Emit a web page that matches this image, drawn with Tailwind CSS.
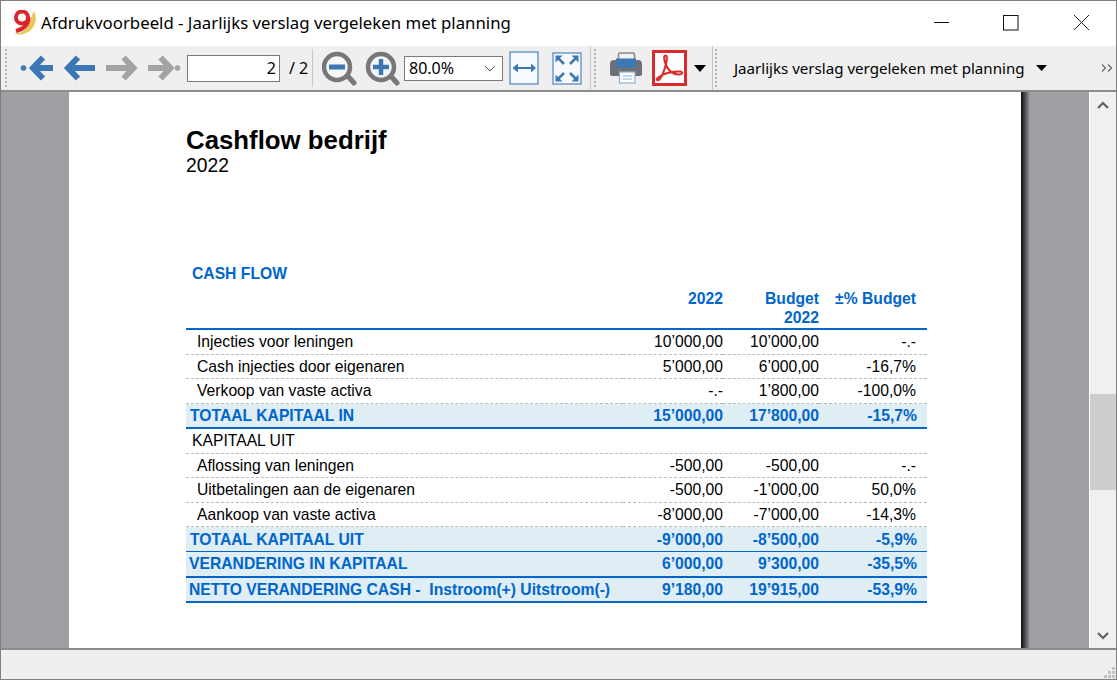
<!DOCTYPE html>
<html lang="nl">
<head>
    <meta charset="UTF-8">
    <title>Afdrukvoorbeeld - Jaarlijks verslag vergeleken met planning</title>
    <script src="https://cdn.jsdelivr.net/npm/@tailwindcss/browser@4"></script>
</head>
<body class="bg-white">
<div class="w-[1117px] h-[680px] flex flex-col border border-[#7f7f7f] overflow-hidden font-['Noto_Sans',sans-serif] text-black">

    <!-- titelbalk -->
    <div class="h-[45px] shrink-0 bg-white flex items-center">
        <svg class="ml-[11px] w-[25px] h-[28px]" viewBox="0 0 25 28">
            <path d="M22 1 C26 9 23 18 16 22 C11 25 5 25.500 2 23 C8 24 13 21 16 15 Z" fill="#e9c65a"/>
            <circle cx="10" cy="7.500" r="6" fill="none" stroke="#d8262c" stroke-width="4"/>
            <path d="M16.500 7 C16.500 14 12 19 4 21" fill="none" stroke="#d8262c" stroke-width="4"/>
        </svg>
        <div class="ml-[4px] text-[16.800px] leading-none whitespace-nowrap">Afdrukvoorbeeld - Jaarlijks verslag vergeleken met planning</div>
        <div class="ml-auto flex items-center">
            <svg class="w-[70px] h-[45px]" viewBox="0 0 70 45"><path d="M28 21.500 H43" stroke="#111" stroke-width="1"/></svg>
            <svg class="w-[70px] h-[45px]" viewBox="0 0 70 45"><rect x="27.500" y="14.500" width="14.500" height="14.500" fill="none" stroke="#111" stroke-width="1"/></svg>
            <svg class="w-[70px] h-[45px]" viewBox="0 0 70 45"><path d="M28 14 L43 29 M43 14 L28 29" stroke="#222" stroke-width="1"/></svg>
        </div>
    </div>

    <!-- werkbalk -->
    <div class="h-[46px] shrink-0 bg-[#efefef] border-b-2 border-[#8c8c8c] flex items-center relative">
        <div class="ml-[4px] w-[3px] h-[38px] border-l-2 border-dotted border-[#b5b5b5]"></div>

        <svg class="ml-[12px] w-[34px] h-[28px]" viewBox="0 0 34 28">
            <circle cx="3.500" cy="14" r="2.800" fill="#3d78b4"/>
            <path d="M23 3.500 L13 14 L23 24.500" fill="none" stroke="#3d78b4" stroke-width="6"/>
            <path d="M14 14 H33" stroke="#3d78b4" stroke-width="6"/>
        </svg>
        <svg class="ml-[8px] w-[34px] h-[28px]" viewBox="0 0 34 28">
            <path d="M16 3.500 L6 14 L16 24.500" fill="none" stroke="#3d78b4" stroke-width="6"/>
            <path d="M7 14 H33" stroke="#3d78b4" stroke-width="6"/>
        </svg>
        <svg class="ml-[9px] w-[34px] h-[28px]" viewBox="0 0 34 28">
            <path d="M18.500 3.500 L28.500 14 L18.500 24.500" fill="none" stroke="#a3a3a3" stroke-width="6"/>
            <path d="M1 14 H27" stroke="#a3a3a3" stroke-width="6"/>
        </svg>
        <svg class="ml-[9px] w-[33px] h-[28px]" viewBox="0 0 33 28">
            <path d="M12.500 3.500 L22.500 14 L12.500 24.500" fill="none" stroke="#a3a3a3" stroke-width="6"/>
            <path d="M0 14 H21" stroke="#a3a3a3" stroke-width="6"/>
            <circle cx="29.500" cy="14" r="2.800" fill="#a3a3a3"/>
        </svg>

        <div class="ml-[6px] w-[93px] h-[27px] bg-white border border-[#7a7a7a] flex items-center justify-end pr-[3px] text-[16px]">2</div>
        <div class="ml-[9px] w-[23px] text-[16px] whitespace-nowrap">/ 2</div>
        <div class="w-px h-[38px] bg-[#c8c8c8]"></div>

        <svg class="ml-[9px] w-[35px] h-[36px]" viewBox="0 0 35 36">
            <path d="M24 24 L32 33" stroke="#777" stroke-width="5" stroke-linecap="round"/>
            <circle cx="15" cy="17" r="13" fill="#f4f6f9" stroke="#777" stroke-width="4.500"/>
            <path d="M7 17 H23" stroke="#3d78b4" stroke-width="5"/>
        </svg>
        <svg class="ml-[8px] w-[35px] h-[36px]" viewBox="0 0 35 36">
            <path d="M24 24 L32 33" stroke="#777" stroke-width="5" stroke-linecap="round"/>
            <circle cx="16" cy="17" r="13" fill="#f4f6f9" stroke="#777" stroke-width="4.500"/>
            <path d="M8 17 H24 M16 9 V25" stroke="#3d78b4" stroke-width="4.500"/>
        </svg>

        <div class="ml-[4px] w-[99px] h-[25px] bg-white border border-[#7a7a7a] flex items-center pl-[4px] text-[16px] relative">
            80.0%
            <svg class="absolute right-[6px] top-[8px] w-[12px] h-[8px]" viewBox="0 0 12 8"><path d="M1 1 L6 6 L11 1" fill="none" stroke="#555" stroke-width="1"/></svg>
        </div>

        <svg class="ml-[6px] w-[30px] h-[34px]" viewBox="0 0 30 34">
            <rect x="1" y="1" width="28" height="32" fill="#f6f9fd" stroke="#6c9bcb" stroke-width="1.500"/>
            <path d="M7 17 H24" stroke="#3d78b4" stroke-width="2"/>
            <path d="M9 12.500 L3.500 17 L9 21.500 Z M22 12.500 L27 17 L22 21.500 Z" fill="#3d78b4"/>
        </svg>
        <svg class="ml-[13px] w-[30px] h-[33px]" viewBox="0 0 30 33">
            <rect x="1" y="1" width="28" height="31" fill="#f6f9fd" stroke="#6c9bcb" stroke-width="1.500"/>
            <path d="M5 5 L12 12 M25 5 L18 12 M5 28 L12 21 M25 28 L18 21" stroke="#3d78b4" stroke-width="2.500"/>
            <path d="M3.500 3.500 H10.500 L3.500 10.500 Z M26.500 3.500 H19.500 L26.500 10.500 Z M3.500 29.500 H10.500 L3.500 22.500 Z M26.500 29.500 H19.500 L26.500 22.500 Z" fill="#3d78b4"/>
        </svg>

        <div class="ml-[8px] w-px h-[44px] bg-[#c8c8c8]"></div>
        <div class="ml-[3px] w-[3px] h-[38px] border-l-2 border-dotted border-[#b5b5b5]"></div>

        <svg class="ml-[13px] w-[32px] h-[32px]" viewBox="0 0 32 32">
            <rect x="8.500" y="1" width="16" height="10" rx="1.500" fill="#f3f3f3" stroke="#888" stroke-width="1.500"/>
            <path d="M0 12 Q0 8 4 8 H28 Q32 8 32 12 V22 Q32 24 30 24 H2 Q0 24 0 22 Z" fill="#6d7278"/>
            <rect x="6" y="6.500" width="20" height="9" fill="#3d78b4"/>
            <rect x="9.500" y="20" width="15.500" height="11" fill="#fbfdff" stroke="#8fb0d0" stroke-width="1.200"/>
            <path d="M12.500 24 H22 M12.500 27 H22" stroke="#8fb0d0" stroke-width="1"/>
        </svg>

        <svg class="ml-[10px] w-[35px] h-[36px]" viewBox="0 0 35 36">
            <rect x="1.500" y="1.500" width="32" height="33" fill="#fff" stroke="#d82c2a" stroke-width="3"/>
            <path d="M5 30 C8 32 12 22 14 14 C15 9 15.500 5.500 13.500 5.500 C11.500 5.500 12 10 13.500 14 C16 20 21 24 26 24.500 C31 25 31.500 22 28 21.500 C22 21 13 23 8.500 26 C6 27.500 4 29 5 30 Z" fill="none" stroke="#d82c2a" stroke-width="2"/>
        </svg>
        <svg class="ml-[7px] w-[12px] h-[7px]" viewBox="0 0 12 7"><path d="M0 0 H12 L6 7 Z" fill="#000"/></svg>

        <div class="ml-[6px] w-px h-[44px] bg-[#c8c8c8]"></div>
        <div class="ml-[2px] w-[3px] h-[38px] border-l-2 border-dotted border-[#b5b5b5]"></div>

        <div class="ml-[16px] text-[15.100px] whitespace-nowrap">Jaarlijks verslag vergeleken met planning</div>
        <svg class="ml-[11px] w-[11px] h-[6px]" viewBox="0 0 11 6"><path d="M0 0 H11 L5.500 6 Z" fill="#000"/></svg>
        <svg class="ml-auto mr-[3px] w-[12px] h-[8px]" viewBox="0 0 12 8"><path d="M1 0.500 L4.500 4 L1 7.500 M7 0.500 L10.500 4 L7 7.500" fill="none" stroke="#666" stroke-width="1.200"/></svg>
    </div>

    <!-- inhoud -->
    <div class="flex-1 min-h-0 flex bg-[#a09fa3]">
        <div class="ml-[68px] w-[952px] bg-white pl-[117px] font-['Liberation_Sans',sans-serif] text-[15.700px] overflow-hidden">
            <h1 class="mt-[33px] text-[25.800px] leading-[31px] font-bold">Cashflow bedrijf</h1>
            <div class="text-[19.300px] leading-[20px]">2022</div>

            <table class="mt-[89px] w-[741px] table-fixed border-separate border-spacing-0">
                <colgroup>
                    <col class="w-[437px]"><col class="w-[100px]"><col class="w-[96px]"><col class="w-[108px]">
                </colgroup>
                <thead class="text-[#0066cc] font-bold text-right leading-[19px] align-top">
                    <tr class="h-[16px]"><td class="pl-[6px] text-left p-0" colspan="4"><div class="h-[16px] leading-[18px]">CASH FLOW</div></td></tr>
                    <tr class="*:border-b-2 *:border-[#0066cc] *:pt-[8px]">
                        <td></td>
                        <td class="h-[49px]">2022</td>
                        <td>Budget<br>2022</td>
                        <td class="pr-[11px]">±% Budget</td>
                    </tr>
                </thead>
                <tbody class="text-right">
                    <tr class="h-[24.500px] *:border-b *:border-dashed *:border-[#bbb]"><td class="pl-[11px] text-left">Injecties voor leningen</td><td>10’000,00</td><td>10’000,00</td><td class="pr-[11px]">-.-</td></tr>
                    <tr class="h-[24.500px] *:border-b *:border-dashed *:border-[#bbb]"><td class="pl-[11px] text-left">Cash injecties door eigenaren</td><td>5’000,00</td><td>6’000,00</td><td class="pr-[11px]">-16,7%</td></tr>
                    <tr class="h-[24.500px] *:border-b *:border-dashed *:border-[#bbb]"><td class="pl-[11px] text-left">Verkoop van vaste activa</td><td>-.-</td><td>1’800,00</td><td class="pr-[11px]">-100,0%</td></tr>
                    <tr class="h-[25px] bg-[#dfedf5] text-[#0066cc] font-bold *:border-b-2 *:border-[#0066cc]"><td class="pl-[4px] text-left">TOTAAL KAPITAAL IN</td><td>15’000,00</td><td>17’800,00</td><td class="pr-[10px]">-15,7%</td></tr>
                    <tr class="h-[24.500px] *:border-b *:border-dashed *:border-[#bbb]"><td class="pl-[6px] text-left" colspan="4">KAPITAAL UIT</td></tr>
                    <tr class="h-[24.500px] *:border-b *:border-dashed *:border-[#bbb]"><td class="pl-[11px] text-left">Aflossing van leningen</td><td>-500,00</td><td>-500,00</td><td class="pr-[11px]">-.-</td></tr>
                    <tr class="h-[24.500px] *:border-b *:border-dashed *:border-[#bbb]"><td class="pl-[11px] text-left">Uitbetalingen aan de eigenaren</td><td>-500,00</td><td>-1’000,00</td><td class="pr-[11px]">50,0%</td></tr>
                    <tr class="h-[24.500px] *:border-b *:border-dashed *:border-[#bbb]"><td class="pl-[11px] text-left">Aankoop van vaste activa</td><td>-8’000,00</td><td>-7’000,00</td><td class="pr-[11px]">-14,3%</td></tr>
                    <tr class="h-[25px] bg-[#dfedf5] text-[#0066cc] font-bold *:border-b *:border-[#0066cc]"><td class="pl-[4px] text-left">TOTAAL KAPITAAL UIT</td><td>-9’000,00</td><td>-8’500,00</td><td class="pr-[10px]">-5,9%</td></tr>
                    <tr class="h-[25px] bg-[#dfedf5] text-[#0066cc] font-bold *:border-b-2 *:border-[#0066cc]"><td class="pl-[3px] text-left">VERANDERING IN KAPITAAL</td><td>6’000,00</td><td>9’300,00</td><td class="pr-[10px]">-35,5%</td></tr>
                    <tr class="h-[25px] bg-[#dfedf5] text-[#0066cc] font-bold *:border-b-2 *:border-[#0066cc]"><td class="pl-[3px] text-left whitespace-pre">NETTO VERANDERING CASH -  Instroom(+) Uitstroom(-)</td><td>9’180,00</td><td>19’915,00</td><td class="pr-[10px]">-53,9%</td></tr>
                </tbody>
            </table>
        </div>
        <div class="w-[9px] bg-gradient-to-r from-[#111] to-[#a09fa3]"></div>

        <!-- schuifbalk -->
        <div class="ml-auto w-[27px] border-l border-white bg-[#f0f0f0] flex flex-col items-center relative">
            <svg class="mt-[9px] w-[12px] h-[8px]" viewBox="0 0 12 8"><path d="M1 7 L6 2 L11 7" fill="none" stroke="#606060" stroke-width="2.200"/></svg>
            <div class="absolute top-[302px] left-0 w-full h-[96px] bg-[#cdcdcd]"></div>
            <svg class="mt-auto mb-[8px] w-[12px] h-[8px]" viewBox="0 0 12 8"><path d="M1 1 L6 6 L11 1" fill="none" stroke="#606060" stroke-width="2.200"/></svg>
        </div>
    </div>

    <!-- statusbalk -->
    <div class="h-[31px] shrink-0 bg-[#efefef] border-t-2 border-[#8c8c8c] flex items-end justify-end">
        <svg class="mb-[1px] mr-[1px] w-[11px] h-[11px]" viewBox="0 0 11 11" fill="#c2c2c2">
            <rect x="8" y="0" width="3" height="3"/><rect x="4" y="4" width="3" height="3"/><rect x="8" y="4" width="3" height="3"/>
            <rect x="0" y="8" width="3" height="3"/><rect x="4" y="8" width="3" height="3"/><rect x="8" y="8" width="3" height="3"/>
        </svg>
    </div>
</div>
</body>
</html>
